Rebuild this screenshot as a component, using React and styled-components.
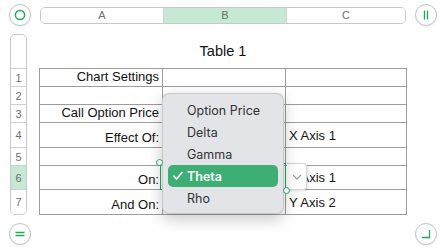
import React from 'react';
import styled, { createGlobalStyle } from 'styled-components';

const GlobalStyle = createGlobalStyle`
  html, body {
    margin: 0;
    padding: 0;
    background: #ffffff;
  }
  body {
    font-family: 'Liberation Sans', Arial, sans-serif;
    color: #111;
  }
`;

const GREEN = '#1fa858';
const HILITE = '#c6e9d6';

const Page = styled.div`
  width: 443px;
  height: 252px;
  padding: 4px 0 0 9px;
  box-sizing: border-box;
  overflow: hidden;
`;

const TopBar = styled.div`
  display: flex;
  align-items: center;
  gap: 9px;
  height: 22px;
`;

const Knob = styled.div`
  width: 22px;
  height: 22px;
  box-sizing: border-box;
  border: 1px solid #c4c4c4;
  border-radius: 50%;
  background: #fff;
  box-shadow: 0 1px 2px rgba(0, 0, 0, 0.08);
  display: flex;
  align-items: center;
  justify-content: center;
  flex: none;
`;

const ColumnHeader = styled.div`
  width: 366px;
  height: 17px;
  box-sizing: border-box;
  border: 1px solid #c8c8c8;
  border-radius: 5px;
  display: grid;
  grid-template-columns: 122px 123px 1fr;
  overflow: hidden;
`;

const ColumnCell = styled.div`
  display: flex;
  align-items: center;
  justify-content: center;
  font-size: 11px;
  color: #6e6e6e;
  background: ${(p) => (p.$active ? HILITE : '#fff')};
  border-left: ${(p) => (p.$first ? 'none' : '1px solid #d0d0d0')};
`;

const Body = styled.div`
  display: flex;
  gap: 12px;
  margin-top: 8px;
  padding-left: 1px;
`;

const RowHeader = styled.div`
  width: 17px;
  box-sizing: border-box;
  border: 1px solid #c8c8c8;
  border-radius: 5px;
  display: flex;
  flex-direction: column;
  overflow: hidden;
  background: #fff;
`;

const RowBlank = styled.div`
  height: 33px;
  border-bottom: 1px solid #d0d0d0;
`;

const RowNumber = styled.div`
  height: ${(p) => p.$h - 1}px;
  border-bottom: ${(p) => (p.$last ? 'none' : '1px solid #d0d0d0')};
  display: flex;
  align-items: center;
  justify-content: center;
  font-size: 11px;
  color: #6e6e6e;
  background: ${(p) => (p.$active ? HILITE : '#fff')};
`;

const Sheet = styled.div`
  width: 368px;
  display: flex;
  flex-direction: column;
`;

const Title = styled.div`
  height: 34px;
  display: flex;
  align-items: center;
  justify-content: center;
  font-size: 14.5px;
  color: #111;
`;

const TableWrap = styled.div`
  position: relative;
`;

const Grid = styled.div`
  display: grid;
  grid-template-columns: 123px 123px 121px;
  grid-template-rows: ${(p) => p.$rows};
  border-top: 1px solid #9c9c9c;
  border-left: 1px solid #9c9c9c;
`;

const Cell = styled.div`
  border-right: 1px solid #9c9c9c;
  border-bottom: 1px solid #9c9c9c;
  font-size: 13px;
  color: #111;
  display: flex;
  white-space: nowrap;
  overflow: hidden;
  justify-content: ${(p) => (p.$right ? 'flex-end' : 'flex-start')};
  align-items: ${(p) => (p.$right ? 'flex-end' : 'center')};
  padding: ${(p) => (p.$right ? '0 3px 2px 0' : '0 0 0 3px')};
`;

const Selection = styled.div`
  position: absolute;
  left: 121px;
  top: 95px;
  width: 126px;
  height: 27px;
  box-sizing: border-box;
  border: 1.5px solid ${GREEN};
`;

const Handle = styled.span`
  position: absolute;
  width: 5px;
  height: 5px;
  border-radius: 50%;
  background: #fff;
  border: 1.2px solid ${GREEN};
  ${(p) => (p.$end ? 'right: -5px; bottom: -5px;' : 'left: -5px; top: -5px;')}
  z-index: 3;
`;

const PopButton = styled.div`
  position: absolute;
  left: 248px;
  top: 95px;
  width: 20px;
  height: 27px;
  box-sizing: border-box;
  background: #fff;
  border: 1px solid #d6d6d6;
  border-left: none;
  border-radius: 0 4px 4px 0;
  box-shadow: 1px 1px 3px rgba(0, 0, 0, 0.12);
  display: flex;
  align-items: center;
  justify-content: center;
`;

const Menu = styled.div`
  position: absolute;
  left: 123px;
  top: 25px;
  width: 122px;
  height: 121px;
  box-sizing: border-box;
  padding: 5px 5px;
  background: #e2e4e8;
  border: 1px solid rgba(0, 0, 0, 0.12);
  border-radius: 7px;
  box-shadow: 0 5px 16px rgba(0, 0, 0, 0.22);
  display: flex;
  flex-direction: column;
  z-index: 2;
`;

const MenuItem = styled.div`
  height: 22px;
  flex: none;
  position: relative;
  display: flex;
  align-items: center;
  padding-left: 19px;
  border-radius: 5px;
  font-family: Inter, 'Liberation Sans', sans-serif;
  font-size: 12.5px;
  font-weight: ${(p) => (p.$selected ? 600 : 400)};
  color: ${(p) => (p.$selected ? '#fff' : '#333')};
  background: ${(p) => (p.$selected ? '#3daf74' : 'transparent')};
`;

const Check = styled.svg`
  position: absolute;
  left: 5px;
  top: 6px;
`;

const BottomBar = styled.div`
  width: 428px;
  display: flex;
  justify-content: space-between;
  margin-top: 8px;
`;

const rowHeights = [18, 18, 18, 25, 18, 24, 25];

const rows = [
  ['Chart Settings', '', ''],
  ['', '', ''],
  ['Call Option Price', '', ''],
  ['Effect Of:', '', 'X Axis 1'],
  ['', '', ''],
  ['On:', '', 'X Axis 1'],
  ['And On:', '', 'Y Axis 2'],
];

const options = ['Option Price', 'Delta', 'Gamma', 'Theta', 'Rho'];

function App() {
  return (
    <>
      <GlobalStyle />
      <Page>
        <TopBar>
          <Knob>
            <svg width="12" height="12" viewBox="0 0 12 12">
              <circle cx="6" cy="6" r="4.6" fill="none" stroke={GREEN} strokeWidth="1.5" />
            </svg>
          </Knob>
          <ColumnHeader>
            <ColumnCell $first>A</ColumnCell>
            <ColumnCell $active>B</ColumnCell>
            <ColumnCell>C</ColumnCell>
          </ColumnHeader>
          <Knob>
            <svg width="10" height="12" viewBox="0 0 10 12">
              <path d="M3.5 1.5v9M6.5 1.5v9" stroke={GREEN} strokeWidth="1.3" />
            </svg>
          </Knob>
        </TopBar>

        <Body>
          <RowHeader>
            <RowBlank />
            {rowHeights.map((h, i) => (
              <RowNumber key={i} $h={h} $active={i === 5} $last={i === 6}>
                {i + 1}
              </RowNumber>
            ))}
          </RowHeader>

          <Sheet>
            <Title>Table 1</Title>
            <TableWrap>
              <Grid $rows={rowHeights.map((h) => h + 'px').join(' ')}>
                {rows.map((r, i) => (
                  <React.Fragment key={i}>
                    <Cell $right>{r[0]}</Cell>
                    <Cell>{r[1]}</Cell>
                    <Cell>{r[2]}</Cell>
                  </React.Fragment>
                ))}
              </Grid>

              <Selection>
                <Handle />
                <Handle $end />
              </Selection>
              <PopButton>
                <svg width="10" height="6" viewBox="0 0 10 6">
                  <path d="M1 1l4 4 4-4" fill="none" stroke="#9a9a9a" strokeWidth="1.1" />
                </svg>
              </PopButton>

              <Menu>
                {options.map((o) => (
                  <MenuItem key={o} $selected={o === 'Theta'}>
                    {o === 'Theta' && (
                      <Check width="10" height="10" viewBox="0 0 10 10">
                        <path d="M1 5.2l2.6 2.8L9 1.5" fill="none" stroke="#fff" strokeWidth="1.6" strokeLinecap="round" strokeLinejoin="round" />
                      </Check>
                    )}
                    {o}
                  </MenuItem>
                ))}
              </Menu>
            </TableWrap>
          </Sheet>
        </Body>

        <BottomBar>
          <Knob>
            <svg width="12" height="10" viewBox="0 0 12 10">
              <path d="M1.5 3.5h9M1.5 6.5h9" stroke={GREEN} strokeWidth="1.3" />
            </svg>
          </Knob>
          <Knob>
            <svg width="12" height="12" viewBox="0 0 12 12">
              <path d="M9.5 2v7.5H2" fill="none" stroke={GREEN} strokeWidth="1.3" />
            </svg>
          </Knob>
        </BottomBar>
      </Page>
    </>
  );
}

export default App;
